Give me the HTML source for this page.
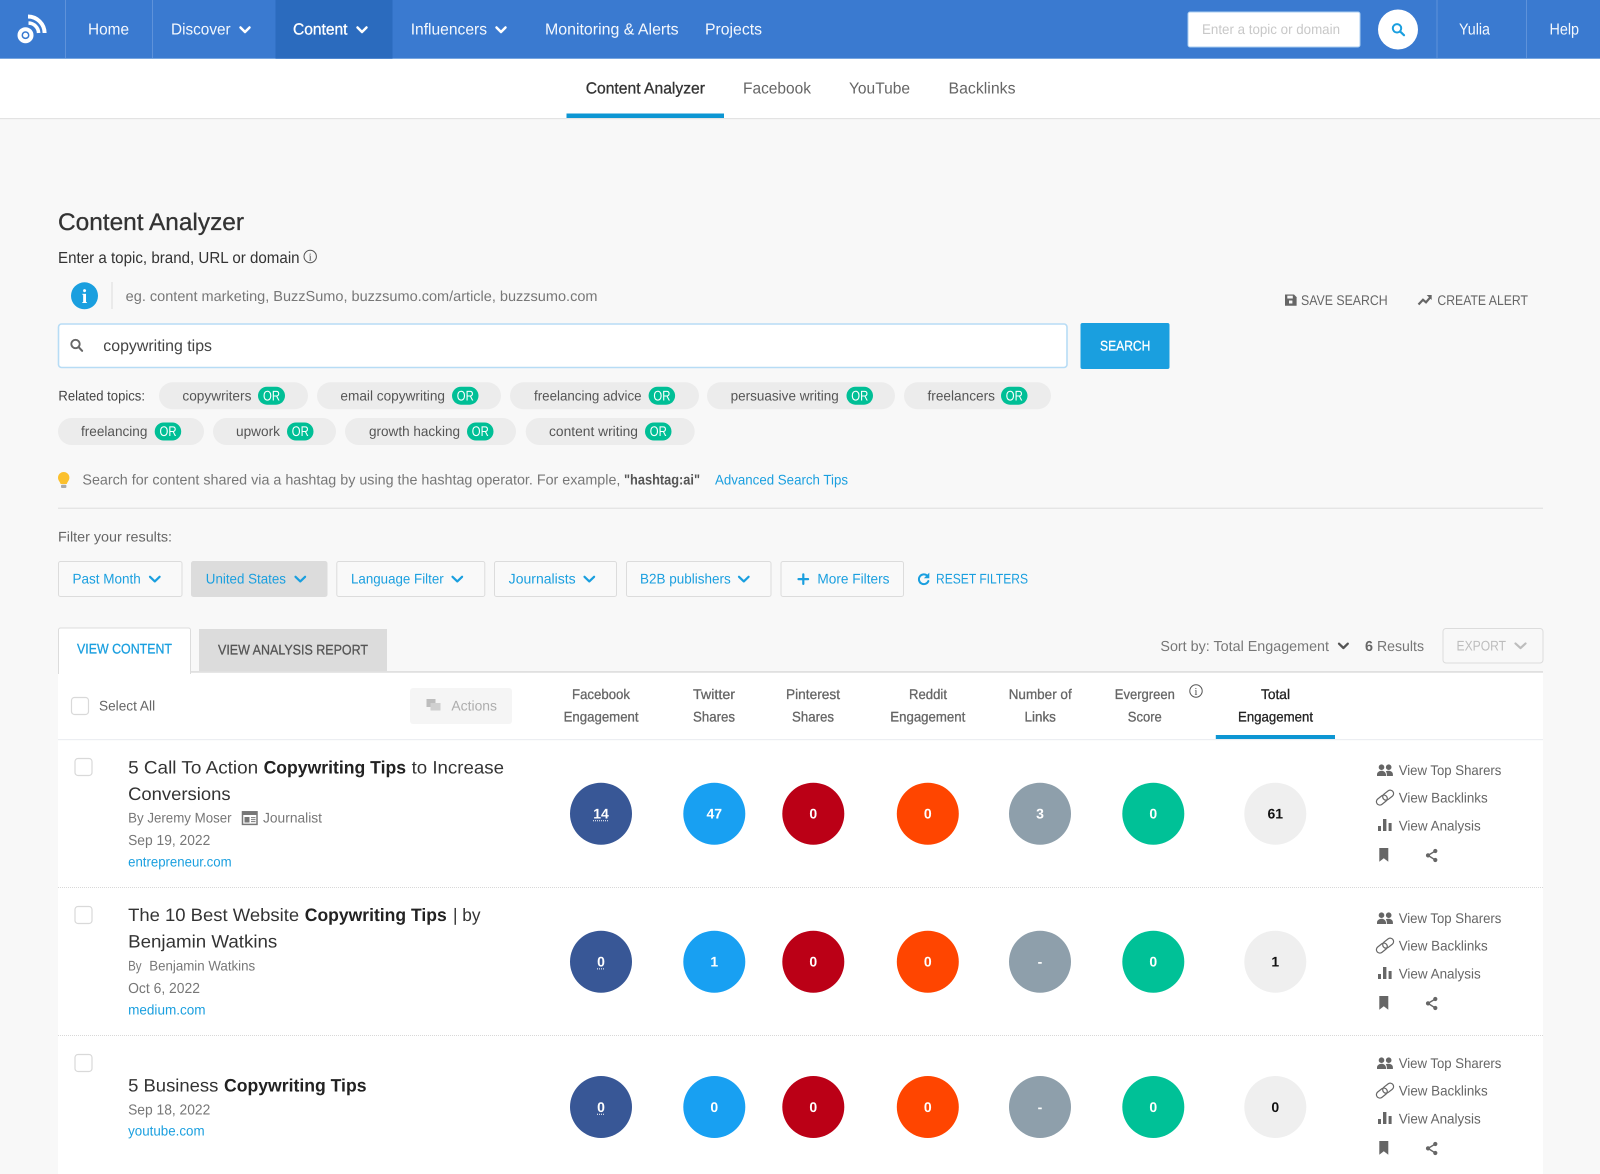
<!DOCTYPE html>
<html lang="en">
<head>
<meta charset="utf-8">
<title>Content Analyzer</title>
<style>
html,body{margin:0;padding:0;width:1600px;height:1174px;overflow:hidden;background:#f8f8f8}
svg{display:block;font-family:"Liberation Sans",Arial,sans-serif;text-rendering:geometricPrecision}
.m{stroke:currentColor;stroke-width:.3px}
.ln{fill:none;stroke-linecap:round;stroke-linejoin:round}
</style>
</head>
<body>
<svg xmlns="http://www.w3.org/2000/svg" width="1600" height="1174" viewBox="0 0 1600 1174">
<defs>
<g id="acts">
  <g fill="#666">
    <circle cx="1381.5" cy="767.2" r="2.8"/><circle cx="1388.7" cy="767.2" r="2.8"/>
    <path d="M1377 776v-1.6c0-2.2 2.6-3.6 4.6-3.6s3.9 1.2 4.4 3.6v1.6zM1386.8 776v-1.8c0-1.1-.4-2.2-1-3 .8-.3 1.9-.5 2.8-.5 1.9 0 4.3 1.3 4.3 3.5v1.8z"/>
    <rect x="1378" y="826" width="3" height="5"/><rect x="1383" y="819" width="3.4" height="12"/><rect x="1388.6" y="823" width="3" height="8"/>
    <path d="M1379.3 848h9v13.7l-4.5-3.5-4.5 3.5z"/>
    <circle cx="1435.3" cy="851" r="2.1"/><circle cx="1428" cy="855.4" r="2.1"/><circle cx="1435.3" cy="860" r="2.1"/>
  </g>
  <path d="M1435.3 851l-7.3 4.4 7.3 4.6" fill="none" stroke="#666" stroke-width="1.4"/>
  <g transform="translate(1385 797.6) rotate(-38)" fill="none" stroke="#666" stroke-width="1.2">
    <rect x="-10" y="-3.4" width="12" height="6.8" rx="3.4"/><rect x="-2" y="-3.4" width="12" height="6.8" rx="3.4"/>
  </g>
</g>
</defs>

<!-- page -->
<rect width="1600" height="1174" fill="#f8f8f8"/>

<!-- top nav -->
<rect width="1600" height="58.5" fill="#3a7ad0"/>
<rect y="58" width="1600" height="1" fill="#77a6e0"/>
<rect x="275.5" width="117" height="58.5" fill="#2b6bbe"/>
<g fill="#5e92da"><rect x="65" width="1" height="58"/><rect x="152" width="1" height="58"/><rect x="1436.5" width="1" height="58"/><rect x="1526" width="1" height="58"/></g>
<g fill="#fff">
  <circle cx="25.5" cy="35.2" r="8"/>
  <path d="M28 16.5A16.8 16.8 0 0 1 44.6 33" fill="none" stroke="#fff" stroke-width="4"/>
  <path d="M28.5 23A10.4 10.4 0 0 1 38.6 33" fill="none" stroke="#fff" stroke-width="3.6"/>
</g>
<circle cx="25.5" cy="35.2" r="3.2" fill="none" stroke="#3a7ad0" stroke-width="1.5"/>
<g fill="#f3f7fd" font-size="16">
  <text x="88" y="34.3" textLength="41" lengthAdjust="spacingAndGlyphs">Home</text>
  <text x="171" y="34.3" textLength="59.6" lengthAdjust="spacingAndGlyphs">Discover</text>
  <text x="293" y="34.3" textLength="54.5" lengthAdjust="spacingAndGlyphs" class="m" color="#fff" fill="#fff">Content</text>
  <text x="410.7" y="34.3" textLength="76.3" lengthAdjust="spacingAndGlyphs">Influencers</text>
  <text x="545" y="34.3" textLength="133.6" lengthAdjust="spacingAndGlyphs">Monitoring &amp; Alerts</text>
  <text x="705" y="34.3" textLength="57" lengthAdjust="spacingAndGlyphs">Projects</text>
  <text x="1459" y="34.3" textLength="31" lengthAdjust="spacingAndGlyphs">Yulia</text>
  <text x="1549.5" y="34.3" textLength="29.5" lengthAdjust="spacingAndGlyphs">Help</text>
</g>
<g class="ln" stroke="#fff" stroke-width="2.5">
  <path d="M240.5 27.5l4.5 4.5 4.5-4.5"/><path d="M357.5 27.5l4.5 4.5 4.5-4.5"/><path d="M496.5 27.5l4.5 4.5 4.5-4.5"/>
</g>
<rect x="1188" y="12" width="172" height="35" rx="2" fill="#fff" stroke="#a9cdf0" stroke-width="1"/>
<text x="1202" y="34" font-size="14" fill="#c8c8c8" textLength="138" lengthAdjust="spacingAndGlyphs">Enter a topic or domain</text>
<circle cx="1398" cy="29.5" r="20" fill="#fff"/>
<circle cx="1397" cy="28.3" r="4.2" fill="none" stroke="#1a9fdf" stroke-width="2"/>
<path d="M1400.2 31.6l3.8 3.6" stroke="#1a9fdf" stroke-width="2.2" stroke-linecap="round"/>

<!-- sub tabs -->
<rect y="59" width="1600" height="59" fill="#fff"/>
<rect y="118" width="1600" height="1.2" fill="#e3e3e3"/>
<rect x="566.5" y="113.5" width="157.5" height="4.5" fill="#0d96d3"/>
<g font-size="16" fill="#666">
  <text x="585.7" y="93.5" textLength="119.3" lengthAdjust="spacingAndGlyphs" fill="#333" class="m" color="#333">Content Analyzer</text>
  <text x="743" y="93.5" textLength="68" lengthAdjust="spacingAndGlyphs">Facebook</text>
  <text x="849" y="93.5" textLength="61" lengthAdjust="spacingAndGlyphs">YouTube</text>
  <text x="948.5" y="93.5" textLength="67" lengthAdjust="spacingAndGlyphs">Backlinks</text>
</g>

<!-- heading -->
<text x="58" y="230.2" font-size="24" fill="#333" textLength="186" lengthAdjust="spacingAndGlyphs" class="m" color="#333">Content Analyzer</text>
<text x="58" y="263" font-size="16" fill="#333" textLength="241.6" lengthAdjust="spacingAndGlyphs">Enter a topic, brand, URL or domain</text>
<circle cx="310.2" cy="256.5" r="6.2" fill="none" stroke="#555" stroke-width="1"/>
<text x="310.2" y="260.5" font-size="10.5" fill="#444" text-anchor="middle" font-family="Liberation Serif">i</text>

<circle cx="84.5" cy="295.8" r="13.5" fill="#1a9fdf"/>
<text x="84.5" y="302.8" font-size="20" font-weight="700" fill="#fff" text-anchor="middle" font-family="Liberation Serif">i</text>
<rect x="111.5" y="282" width="1" height="27" fill="#dcdcdc"/>
<text x="125.7" y="301" font-size="14.5" fill="#777" textLength="471.8" lengthAdjust="spacingAndGlyphs">eg. content marketing, BuzzSumo, buzzsumo.com/article, buzzsumo.com</text>

<text x="1301" y="305" font-size="14" fill="#666" textLength="86.7" lengthAdjust="spacingAndGlyphs">SAVE SEARCH</text>
<path d="M1285 294.5h9l2.6 2.6v8.6h-11.6z" fill="#666"/>
<rect x="1287.3" y="295.7" width="5.5" height="2.8" fill="#f8f8f8"/><rect x="1289" y="300.5" width="3.4" height="3" fill="#f8f8f8"/>
<text x="1437.4" y="305" font-size="14" fill="#666" textLength="90.6" lengthAdjust="spacingAndGlyphs">CREATE ALERT</text>
<path d="M1418.5 304.5l4.5-4.7 3 2.5 4.7-5.5" fill="none" stroke="#666" stroke-width="2.2"/>
<path d="M1426.7 295h5v5z" fill="#666"/>

<!-- search box -->
<rect x="58.5" y="324" width="1008.5" height="43.5" rx="3" fill="#fff" stroke="#b7dcf5" stroke-width="1.6"/>
<circle cx="75.5" cy="344" r="4.2" fill="none" stroke="#666" stroke-width="1.9"/>
<path d="M78.7 347.2l3.4 3.6" stroke="#666" stroke-width="2.1" stroke-linecap="round"/>
<text x="103.3" y="351" font-size="16" fill="#444" textLength="108.7" lengthAdjust="spacingAndGlyphs">copywriting tips</text>
<rect x="1080.5" y="323" width="89" height="46" rx="2" fill="#1a9fdf"/>
<text x="1100" y="350.5" font-size="14" fill="#fff" textLength="50.4" lengthAdjust="spacingAndGlyphs" class="m" color="#fff">SEARCH</text>

<!-- related topics -->
<text x="58.4" y="400.5" font-size="14" fill="#444" textLength="86.6" lengthAdjust="spacingAndGlyphs">Related topics:</text>
<g fill="#ececec">
  <rect x="159" y="382.3" width="149" height="27" rx="13.5"/>
  <rect x="317" y="382.3" width="184" height="27" rx="13.5"/>
  <rect x="510" y="382.3" width="189" height="27" rx="13.5"/>
  <rect x="707" y="382.3" width="188" height="27" rx="13.5"/>
  <rect x="904" y="382.3" width="147" height="27" rx="13.5"/>
  <rect x="58" y="418" width="146" height="27" rx="13.5"/>
  <rect x="213" y="418" width="123" height="27" rx="13.5"/>
  <rect x="345" y="418" width="171" height="27" rx="13.5"/>
  <rect x="525.7" y="418" width="169" height="27" rx="13.5"/>
</g>
<g fill="#00bf96">
  <rect x="258" y="386.7" width="27" height="18" rx="9"/>
  <rect x="452" y="386.7" width="26.5" height="18" rx="9"/>
  <rect x="648.6" y="386.7" width="26.5" height="18" rx="9"/>
  <rect x="846.5" y="386.7" width="26.5" height="18" rx="9"/>
  <rect x="1001" y="386.7" width="26.5" height="18" rx="9"/>
  <rect x="154.7" y="422.5" width="26.5" height="18" rx="9"/>
  <rect x="287" y="422.5" width="26.5" height="18" rx="9"/>
  <rect x="467" y="422.5" width="26.5" height="18" rx="9"/>
  <rect x="645" y="422.5" width="26.5" height="18" rx="9"/>
</g>
<g font-size="14" fill="#555">
  <text x="182.4" y="400.5" textLength="69" lengthAdjust="spacingAndGlyphs">copywriters</text>
  <text x="340.4" y="400.5" textLength="104.6" lengthAdjust="spacingAndGlyphs">email copywriting</text>
  <text x="534" y="400.5" textLength="107.6" lengthAdjust="spacingAndGlyphs">freelancing advice</text>
  <text x="730.6" y="400.5" textLength="108.2" lengthAdjust="spacingAndGlyphs">persuasive writing</text>
  <text x="927.5" y="400.5" textLength="67.5" lengthAdjust="spacingAndGlyphs">freelancers</text>
  <text x="81" y="436" textLength="66.4" lengthAdjust="spacingAndGlyphs">freelancing</text>
  <text x="236" y="436" textLength="44" lengthAdjust="spacingAndGlyphs">upwork</text>
  <text x="369" y="436" textLength="91" lengthAdjust="spacingAndGlyphs">growth hacking</text>
  <text x="549" y="436" textLength="89" lengthAdjust="spacingAndGlyphs">content writing</text>
</g>
<g font-size="14" fill="#fff">
  <text x="263" y="400.5" textLength="17" lengthAdjust="spacingAndGlyphs">OR</text>
  <text x="456.8" y="400.5" textLength="17" lengthAdjust="spacingAndGlyphs">OR</text>
  <text x="653.4" y="400.5" textLength="17" lengthAdjust="spacingAndGlyphs">OR</text>
  <text x="851.3" y="400.5" textLength="17" lengthAdjust="spacingAndGlyphs">OR</text>
  <text x="1005.8" y="400.5" textLength="17" lengthAdjust="spacingAndGlyphs">OR</text>
  <text x="159.5" y="436" textLength="17" lengthAdjust="spacingAndGlyphs">OR</text>
  <text x="291.8" y="436" textLength="17" lengthAdjust="spacingAndGlyphs">OR</text>
  <text x="471.8" y="436" textLength="17" lengthAdjust="spacingAndGlyphs">OR</text>
  <text x="649.8" y="436" textLength="17" lengthAdjust="spacingAndGlyphs">OR</text>
</g>

<!-- tip -->
<path d="M63.7 472a5.7 5.7 0 0 1 5.7 5.7c0 2.7-2 4-2.6 6.3h-6.2c-.6-2.3-2.6-3.6-2.6-6.3a5.7 5.7 0 0 1 5.7-5.7z" fill="#fbc02d"/>
<rect x="61" y="484.8" width="5.4" height="3.2" rx="1" fill="#aaa"/>
<text x="82.4" y="484.7" font-size="14.5" fill="#777" textLength="538" lengthAdjust="spacingAndGlyphs">Search for content shared via a hashtag by using the hashtag operator. For example,</text>
<text x="624" y="484.7" font-size="14.5" fill="#555" font-weight="700" textLength="76" lengthAdjust="spacingAndGlyphs">"hashtag:ai"</text>
<text x="715" y="484.7" font-size="14" fill="#1a9fdf" textLength="133" lengthAdjust="spacingAndGlyphs">Advanced Search Tips</text>
<rect x="58" y="507.7" width="1485" height="1" fill="#ddd"/>

<!-- filters -->
<text x="58" y="541.7" font-size="14" fill="#666" textLength="114" lengthAdjust="spacingAndGlyphs">Filter your results:</text>
<g fill="#f9f9f9" stroke="#dcdcdc" stroke-width="1">
  <rect x="58.5" y="561.5" width="123.5" height="35" rx="2"/>
  <rect x="191.5" y="561.5" width="135.5" height="35" rx="2" fill="#dcdcdc"/>
  <rect x="336.8" y="561.5" width="148" height="35" rx="2"/>
  <rect x="494.5" y="561.5" width="122" height="35" rx="2"/>
  <rect x="626.5" y="561.5" width="144.5" height="35" rx="2"/>
  <rect x="781" y="561.5" width="122.5" height="35" rx="2"/>
</g>
<g font-size="14" fill="#1a9fdf">
  <text x="72.5" y="583.3" textLength="68.3" lengthAdjust="spacingAndGlyphs">Past Month</text>
  <text x="205.8" y="583.3" textLength="80.2" lengthAdjust="spacingAndGlyphs">United States</text>
  <text x="351" y="583.3" textLength="92.7" lengthAdjust="spacingAndGlyphs">Language Filter</text>
  <text x="508.7" y="583.3" textLength="67" lengthAdjust="spacingAndGlyphs">Journalists</text>
  <text x="640" y="583.3" textLength="90.7" lengthAdjust="spacingAndGlyphs">B2B publishers</text>
  <text x="817.4" y="583.3" textLength="72.1" lengthAdjust="spacingAndGlyphs">More Filters</text>
  <text x="936" y="583.3" textLength="92" lengthAdjust="spacingAndGlyphs">RESET FILTERS</text>
</g>
<g class="ln" stroke="#1a9fdf" stroke-width="2.2">
  <path d="M150 576.8l4.8 4.6 4.8-4.6"/><path d="M295.5 576.8l4.8 4.6 4.8-4.6"/><path d="M452.5 576.8l4.8 4.6 4.8-4.6"/>
  <path d="M584.5 576.8l4.8 4.6 4.8-4.6"/><path d="M739 576.8l4.8 4.6 4.8-4.6"/>
  <path d="M803.3 574.3v9.6M798.5 579.1h9.6"/>
  <path d="M927.3 575.8a4.9 4.9 0 1 0 1.1 5.2" stroke-width="2"/>
</g>
<path d="M929.3 572.6v5.6h-5.4z" fill="#1a9fdf"/>

<!-- tabs -->
<rect x="199" y="629" width="188" height="43" fill="#dcdcdc"/>
<rect x="58" y="672" width="1485" height="502" fill="#fff"/>
<rect x="191" y="671" width="1352" height="1.8" fill="#e0e0e0"/>
<path d="M58.5 674V630a2 2 0 0 1 2-2h128a2 2 0 0 1 2 2v44" fill="#fff" stroke="#dcdcdc"/>
<rect x="59" y="670" width="131" height="6" fill="#fff"/>
<text x="77" y="653.7" font-size="14" fill="#1a9fdf" textLength="95" lengthAdjust="spacingAndGlyphs" class="m" color="#1a9fdf">VIEW CONTENT</text>
<text x="218" y="654.3" font-size="14" fill="#555" textLength="150" lengthAdjust="spacingAndGlyphs" class="m" color="#555">VIEW ANALYSIS REPORT</text>

<text x="1160.4" y="651" font-size="14.5" fill="#777" textLength="168.6" lengthAdjust="spacingAndGlyphs">Sort by: Total Engagement</text>
<path class="ln" d="M1339 643.7l4.4 4.3 4.4-4.3" stroke="#555" stroke-width="2.3"/>
<text x="1365" y="651" font-size="14.5" font-weight="700" fill="#666" textLength="8" lengthAdjust="spacingAndGlyphs">6</text>
<text x="1377" y="651" font-size="14.5" fill="#777" textLength="47" lengthAdjust="spacingAndGlyphs">Results</text>
<rect x="1443" y="628.5" width="100" height="34.5" rx="3" fill="#f8f8f8" stroke="#dcdcdc"/>
<text x="1456.5" y="650.7" font-size="14" fill="#bdbdbd" textLength="49.5" lengthAdjust="spacingAndGlyphs">EXPORT</text>
<path class="ln" d="M1515.5 643.5l5 4.6 5-4.6" stroke="#bdbdbd" stroke-width="2.2"/>

<!-- table header -->
<rect x="71.5" y="697.5" width="17" height="17" rx="3" fill="#fff" stroke="#d9d9d9" stroke-width="1.2"/>
<text x="99" y="710.5" font-size="14" fill="#666" textLength="56.1" lengthAdjust="spacingAndGlyphs">Select All</text>
<rect x="410" y="688" width="102" height="36" rx="3" fill="#f5f5f5"/>
<rect x="426.5" y="699" width="9" height="8" fill="#bdbdbd"/><rect x="430.5" y="703" width="10" height="7.5" fill="#d0d0d0"/>
<text x="451.4" y="710.5" font-size="14" fill="#adadad" textLength="45.6" lengthAdjust="spacingAndGlyphs">Actions</text>
<g font-size="14" fill="#666" class="m" color="#666">
  <text x="572" y="699.2" textLength="58" lengthAdjust="spacingAndGlyphs">Facebook</text>
  <text x="563.6" y="721.7" textLength="75" lengthAdjust="spacingAndGlyphs">Engagement</text>
  <text x="693" y="699.2" textLength="42" lengthAdjust="spacingAndGlyphs">Twitter</text>
  <text x="693" y="721.7" textLength="42" lengthAdjust="spacingAndGlyphs">Shares</text>
  <text x="786" y="699.2" textLength="54" lengthAdjust="spacingAndGlyphs">Pinterest</text>
  <text x="792" y="721.7" textLength="42" lengthAdjust="spacingAndGlyphs">Shares</text>
  <text x="909" y="699.2" textLength="38" lengthAdjust="spacingAndGlyphs">Reddit</text>
  <text x="890.3" y="721.7" textLength="75" lengthAdjust="spacingAndGlyphs">Engagement</text>
  <text x="1008.7" y="699.2" textLength="63" lengthAdjust="spacingAndGlyphs">Number of</text>
  <text x="1024.5" y="721.7" textLength="31.4" lengthAdjust="spacingAndGlyphs">Links</text>
  <text x="1114.8" y="699.2" textLength="60" lengthAdjust="spacingAndGlyphs">Evergreen</text>
  <text x="1127.8" y="721.7" textLength="34" lengthAdjust="spacingAndGlyphs">Score</text>
</g>
<g font-size="14" fill="#222" class="m" color="#222">
  <text x="1261" y="699.2" textLength="29" lengthAdjust="spacingAndGlyphs">Total</text>
  <text x="1238" y="721.7" textLength="75" lengthAdjust="spacingAndGlyphs">Engagement</text>
</g>
<circle cx="1196" cy="691" r="6.2" fill="none" stroke="#555" stroke-width="1"/>
<text x="1196" y="695" font-size="10.5" fill="#444" text-anchor="middle" font-family="Liberation Serif">i</text>
<rect x="58" y="739" width="1485" height="1.2" fill="#eceef2"/>
<rect x="1215.8" y="735" width="119.2" height="4" fill="#0d96d3"/>

<!-- row separators -->
<path d="M58 887.5H1543M58 1035.5H1543" stroke="#d8d8d8" stroke-width="1" stroke-dasharray="1 1"/>

<!-- checkboxes -->
<g fill="#fff" stroke="#d9d9d9" stroke-width="1.2">
  <rect x="75" y="758.5" width="17" height="17" rx="3"/>
  <rect x="75" y="906.5" width="17" height="17" rx="3"/>
  <rect x="75" y="1054.5" width="17" height="17" rx="3"/>
</g>

<!-- titles -->
<g font-size="18" fill="#333">
  <text x="128.1" y="773.7" textLength="130.1" lengthAdjust="spacingAndGlyphs">5 Call To Action</text>
  <text x="263.6" y="773.7" textLength="142.4" lengthAdjust="spacingAndGlyphs" font-weight="700" fill="#222">Copywriting Tips</text>
  <text x="411.6" y="773.7" textLength="92.4" lengthAdjust="spacingAndGlyphs">to Increase</text>
  <text x="128.1" y="800.2" textLength="102.5" lengthAdjust="spacingAndGlyphs">Conversions</text>
  <text x="128.1" y="921.2" textLength="171" lengthAdjust="spacingAndGlyphs">The 10 Best Website</text>
  <text x="304.8" y="921.2" textLength="141.9" lengthAdjust="spacingAndGlyphs" font-weight="700" fill="#222">Copywriting Tips</text>
  <text x="453" y="921.2" textLength="27.5" lengthAdjust="spacingAndGlyphs">| by</text>
  <text x="128.1" y="947.7" textLength="149.2" lengthAdjust="spacingAndGlyphs">Benjamin Watkins</text>
  <text x="128.1" y="1091.3" textLength="90.3" lengthAdjust="spacingAndGlyphs">5 Business</text>
  <text x="224" y="1091.3" textLength="142.5" lengthAdjust="spacingAndGlyphs" font-weight="700" fill="#222">Copywriting Tips</text>
</g>

<!-- meta -->
<g font-size="14" fill="#777">
  <text x="128.1" y="822.7" textLength="103.5" lengthAdjust="spacingAndGlyphs">By Jeremy Moser</text>
  <text x="263" y="822.7" textLength="59" lengthAdjust="spacingAndGlyphs">Journalist</text>
  <text x="128.1" y="970.5" textLength="13.5" lengthAdjust="spacingAndGlyphs">By</text>
  <text x="149.2" y="970.5" textLength="106" lengthAdjust="spacingAndGlyphs">Benjamin Watkins</text>
</g>
<g font-size="14.5" fill="#777">
  <text x="128.1" y="845" textLength="82.2" lengthAdjust="spacingAndGlyphs">Sep 19, 2022</text>
  <text x="128.1" y="993" textLength="71.9" lengthAdjust="spacingAndGlyphs">Oct 6, 2022</text>
  <text x="128.1" y="1114.5" textLength="82.2" lengthAdjust="spacingAndGlyphs">Sep 18, 2022</text>
</g>
<g font-size="14" fill="#1a9fdf">
  <text x="128.1" y="866.7" textLength="103.5" lengthAdjust="spacingAndGlyphs">entrepreneur.com</text>
  <text x="128.1" y="1014.7" textLength="77.5" lengthAdjust="spacingAndGlyphs">medium.com</text>
  <text x="128.1" y="1135.7" textLength="76.5" lengthAdjust="spacingAndGlyphs">youtube.com</text>
</g>
<rect x="242.5" y="811.8" width="14.5" height="12.6" fill="none" stroke="#777" stroke-width="1.5"/>
<rect x="242.5" y="811.8" width="14.5" height="3.2" fill="#777"/>
<rect x="244.5" y="817" width="5" height="5.5" fill="#777"/>
<path d="M251 817.6h4.5M251 819.6h4.5M251 821.6h4.5" stroke="#777" stroke-width="1"/>

<!-- circles row 1 -->
<g><circle cx="601" cy="813.7" r="31" fill="#385796"/><circle cx="714.3" cy="813.7" r="31" fill="#18a0f2"/><circle cx="813.3" cy="813.7" r="31" fill="#bb0016"/><circle cx="927.8" cy="813.7" r="31" fill="#ff4500"/><circle cx="1040" cy="813.7" r="31" fill="#8e9fab"/><circle cx="1153.3" cy="813.7" r="31" fill="#00c197"/><circle cx="1275.3" cy="813.7" r="31" fill="#efefef"/></g>
<!-- circles row 2 -->
<g><circle cx="601" cy="961.7" r="31" fill="#385796"/><circle cx="714.3" cy="961.7" r="31" fill="#18a0f2"/><circle cx="813.3" cy="961.7" r="31" fill="#bb0016"/><circle cx="927.8" cy="961.7" r="31" fill="#ff4500"/><circle cx="1040" cy="961.7" r="31" fill="#8e9fab"/><circle cx="1153.3" cy="961.7" r="31" fill="#00c197"/><circle cx="1275.3" cy="961.7" r="31" fill="#efefef"/></g>
<!-- circles row 3 -->
<g><circle cx="601" cy="1107" r="31" fill="#385796"/><circle cx="714.3" cy="1107" r="31" fill="#18a0f2"/><circle cx="813.3" cy="1107" r="31" fill="#bb0016"/><circle cx="927.8" cy="1107" r="31" fill="#ff4500"/><circle cx="1040" cy="1107" r="31" fill="#8e9fab"/><circle cx="1153.3" cy="1107" r="31" fill="#00c197"/><circle cx="1275.3" cy="1107" r="31" fill="#efefef"/></g>
<g font-size="14" font-weight="700" fill="#fff" text-anchor="middle">
  <text x="601" y="818.5">14</text><text x="714.3" y="818.5">47</text><text x="813.3" y="818.5">0</text><text x="927.8" y="818.5">0</text><text x="1040" y="818.5">3</text><text x="1153.3" y="818.5">0</text>
  <text x="601" y="966.7">0</text><text x="714.3" y="966.7">1</text><text x="813.3" y="966.7">0</text><text x="927.8" y="966.7">0</text><text x="1040" y="966.7">-</text><text x="1153.3" y="966.7">0</text>
  <text x="601" y="1112">0</text><text x="714.3" y="1112">0</text><text x="813.3" y="1112">0</text><text x="927.8" y="1112">0</text><text x="1040" y="1112">-</text><text x="1153.3" y="1112">0</text>
  <text x="1275.3" y="818.5" fill="#111">61</text><text x="1275.3" y="966.7" fill="#111">1</text><text x="1275.3" y="1112" fill="#111">0</text>
</g>
<path d="M593 820.7h16M597 968.9h8M597 1114.2h8" stroke="#fff" stroke-width="1" stroke-dasharray="1 1"/>

<!-- row actions -->
<use href="#acts"/>
<use href="#acts" transform="translate(0 148)"/>
<use href="#acts" transform="translate(0 293)"/>
<g font-size="14" fill="#666">
  <text x="1398.7" y="774.9" textLength="102.7" lengthAdjust="spacingAndGlyphs">View Top Sharers</text>
  <text x="1398.7" y="802.6" textLength="89" lengthAdjust="spacingAndGlyphs">View Backlinks</text>
  <text x="1398.7" y="830.3" textLength="82" lengthAdjust="spacingAndGlyphs">View Analysis</text>
  <text x="1398.7" y="922.9" textLength="102.7" lengthAdjust="spacingAndGlyphs">View Top Sharers</text>
  <text x="1398.7" y="950.6" textLength="89" lengthAdjust="spacingAndGlyphs">View Backlinks</text>
  <text x="1398.7" y="978.3" textLength="82" lengthAdjust="spacingAndGlyphs">View Analysis</text>
  <text x="1398.7" y="1067.9" textLength="102.7" lengthAdjust="spacingAndGlyphs">View Top Sharers</text>
  <text x="1398.7" y="1095.6" textLength="89" lengthAdjust="spacingAndGlyphs">View Backlinks</text>
  <text x="1398.7" y="1123.3" textLength="82" lengthAdjust="spacingAndGlyphs">View Analysis</text>
</g>
</svg>
</body>
</html>
